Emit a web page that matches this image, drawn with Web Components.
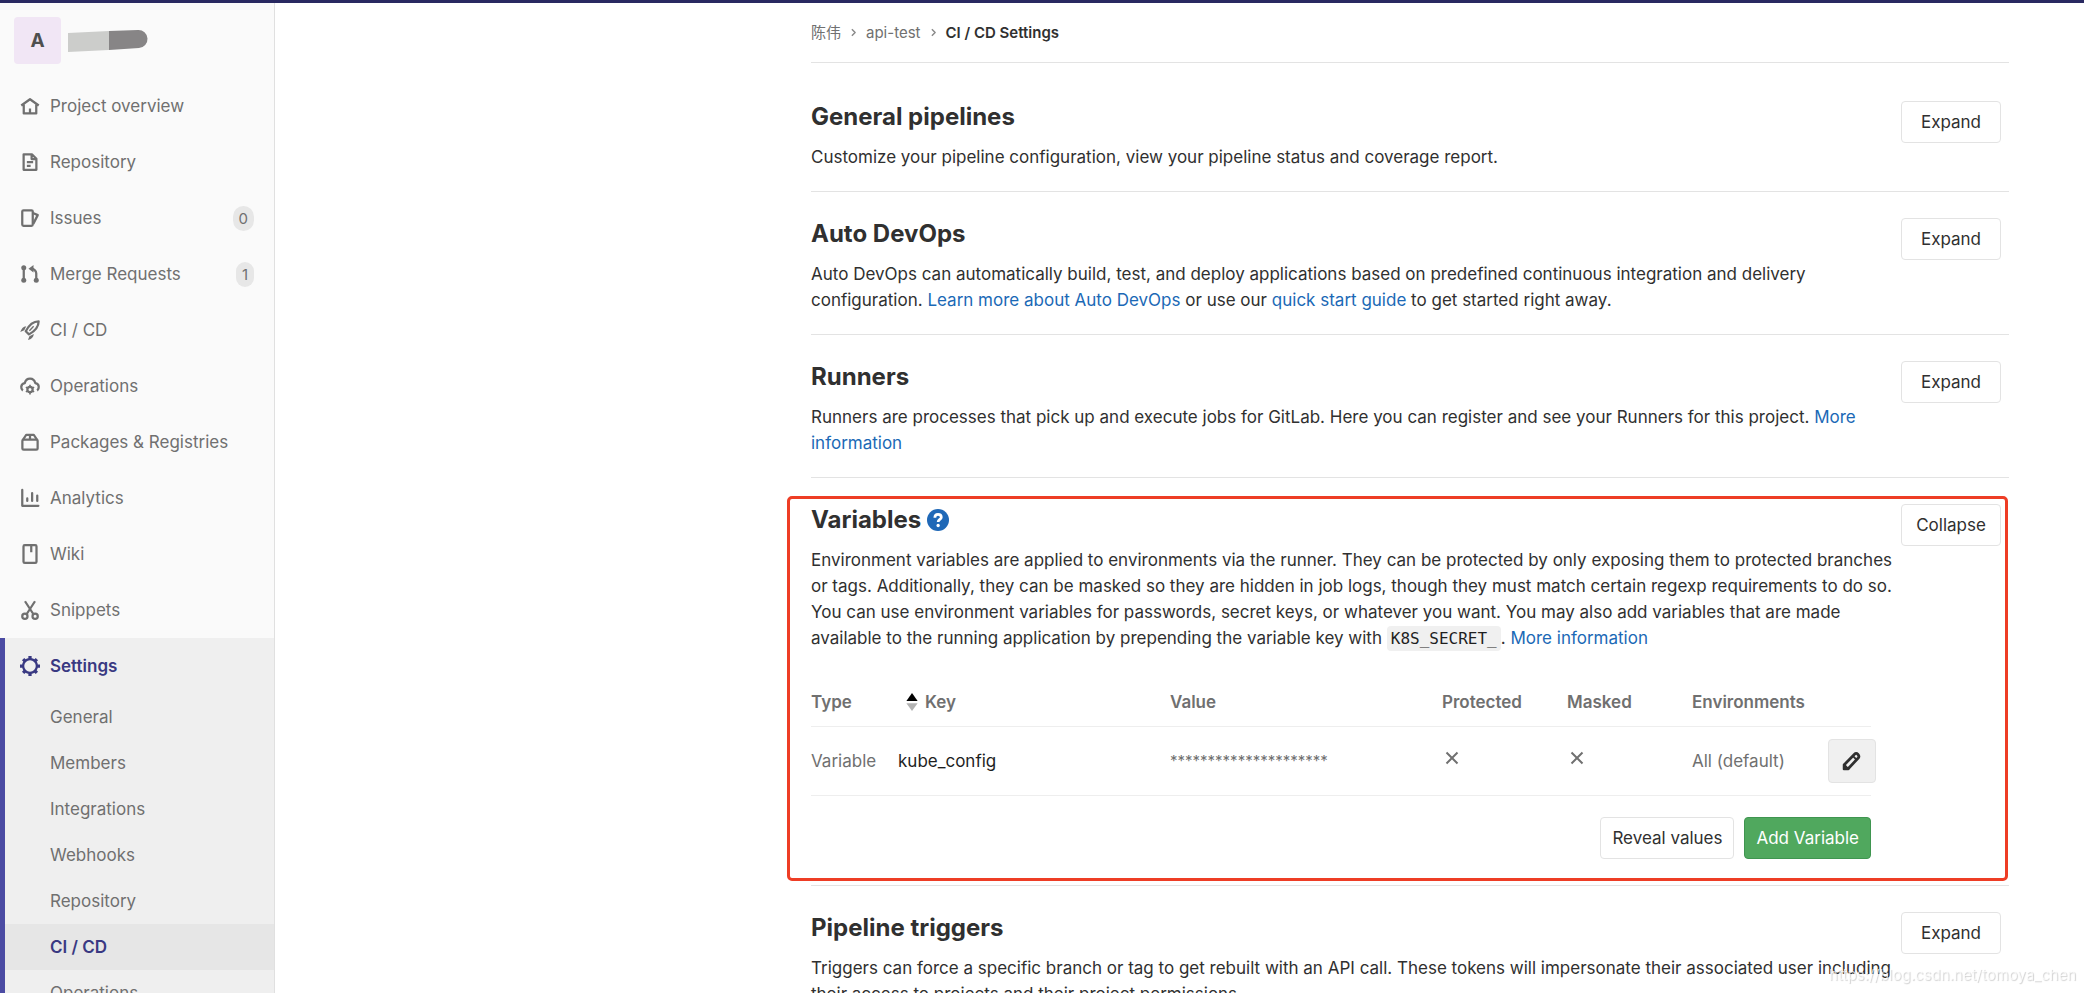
<!DOCTYPE html>
<html lang="en">
<head>
<meta charset="utf-8">
<meta name="viewport" content="width=device-width, initial-scale=1">
<title>CI / CD Settings</title>
<style>
  body { margin: 0; font-family: Inter, "Noto Sans CJK SC", "Liberation Sans", sans-serif; font-size: 17px; line-height: 26px; color: #303030; background: #fff; }
  a { color: #1b69b6; text-decoration: none; }
  code { font-family: "DejaVu Sans Mono", monospace; font-size: 16px; line-height: 20px; color: #1f1f1f; background: #f0f0f0; border-radius: 4px; padding: 3px 4px; }
</style>
</head>
<body>
<app-shell>
  <side-nav slot="nav">
    <nav-item icon="home">Project overview</nav-item>
    <nav-item icon="doc">Repository</nav-item>
    <nav-item icon="issues" count="0">Issues</nav-item>
    <nav-item icon="merge" count="1">Merge Requests</nav-item>
    <nav-item icon="rocket">CI / CD</nav-item>
    <nav-item icon="cloud">Operations</nav-item>
    <nav-item icon="package">Packages &amp; Registries</nav-item>
    <nav-item icon="chart">Analytics</nav-item>
    <nav-item icon="book">Wiki</nav-item>
    <nav-item icon="scissors">Snippets</nav-item>
    <nav-group slot="group">
      <nav-item icon="gear" active>Settings</nav-item>
      <nav-item sub>General</nav-item>
      <nav-item sub>Members</nav-item>
      <nav-item sub>Integrations</nav-item>
      <nav-item sub>Webhooks</nav-item>
      <nav-item sub>Repository</nav-item>
      <nav-item sub active>CI / CD</nav-item>
      <nav-item sub>Operations</nav-item>
    </nav-group>
  </side-nav>

  <crumb-trail></crumb-trail>

  <settings-section heading="General pipelines" action="Expand" first>
    Customize your pipeline configuration, view your pipeline status and coverage report.
  </settings-section>
  <settings-section heading="Auto DevOps" action="Expand">
    Auto DevOps can automatically build, test, and deploy applications based on predefined continuous integration and delivery<br>
    configuration. <a href="#autodevops">Learn more about Auto DevOps</a> or use our <a href="#quickstart">quick start guide</a> to get started right away.
  </settings-section>
  <settings-section heading="Runners" action="Expand">
    Runners are processes that pick up and execute jobs for GitLab. Here you can register and see your Runners for this project. <a href="#runners">More<br>information</a>
  </settings-section>
  <settings-section heading="Variables" action="Collapse" help marked>
    Environment variables are applied to environments via the runner. They can be protected by only exposing them to protected branches<br>
    or tags. Additionally, they can be masked so they are hidden in job logs, though they must match certain regexp requirements to do so.<br>
    You can use environment variables for passwords, secret keys, or whatever you want. You may also add variables that are made<br>
    available to the running application by prepending the variable key with <code>K8S_SECRET_</code>. <a href="#variables">More information</a>
    <variables-table slot="body"></variables-table>
  </settings-section>
  <settings-section heading="Pipeline triggers" action="Expand">
    Triggers can force a specific branch or tag to get rebuilt with an API call. These tokens will impersonate their associated user including<br>
    their access to projects and their project permissions.
  </settings-section>
</app-shell>

<script>
const ICONS = {
  home: '<path d="M1 7.6 8 2.6l7 5M3 7v6.9h10V7M8 13.9v-4" />',
  doc: '<path d="M2.9 1.8h6.6l3.6 3.6v8.8H2.900zM9.300 1.800v3.800h3.800M5.500 8.100h5M5.500 11h3"/>',
  issues: '<rect x="1.800" y="1.800" width="8.400" height="12.400" rx="1"/><path d="m10.400 4 3.800 1.700-3.600 7"/>',
  merge: '<path d="M3 3v10M13 13V7.500A3.700 3.700 0 0 0 9 4"/><g fill="currentColor" stroke="none"><circle cx="3" cy="2.900" r="2"/><circle cx="3" cy="13" r="2"/><circle cx="13" cy="13" r="2"/><path d="M10.800.8v6L6.800 3.800z"/></g>',
  rocket: '<path d="M14.900 1.100c-4.100 0-7.900 3.300-10.300 7.900l2.600 2.500c4.500-2.600 7.700-6 7.700-10.400z"/><path d="m7.500 8.600 3.400-3.600" stroke-width="1.100"/><path d="M.2 9.600C1 7 2.500 5.200 5 4.900L3.400 8.200zM6.400 15.900c2.700-.5 4.300-2.100 4.700-4.700l-3.600 1.700z" fill="currentColor" stroke="none"/>',
  cloud: '<path d="M2.300 11.600C1.300 10.900.9 9.700 1 8.600c.2-1.700 1.400-2.700 2.800-2.900C4.400 3.300 6 2 8 2s3.700 1.300 4.200 3.700c1.500.2 2.700 1.300 2.800 2.900.1 1.100-.3 2.300-1.300 3"/><circle cx="8" cy="10.800" r="2.100"/><path d="M8 7v2M8 12.600v2.200M4.700 8.900l1.700 1M9.600 11.700l1.700 1M4.700 12.700l1.700-1M9.600 9.900l1.700-1" stroke-width="1.300"/>',
  package: '<rect x="1.900" y="6" width="12.200" height="8.100" rx="1"/><path d="M2.300 6.300 5 2.200h6l2.700 4.100M8 2.200V6" />',
  chart: '<path d="M1.800 1.500v12.700h12.900M5.800 10.300v-2M9.700 10.300V4M13.800 10.300V6" stroke-linecap="round"/>',
  book: '<rect x="2.800" y=".9" width="10.400" height="14.200" rx="1"/><path d="M9 1v5.600"/>',
  scissors: '<path d="M4 1 10.500 11M12 1 5.500 11"/><circle cx="3.900" cy="13" r="2.100"/><circle cx="12.100" cy="13" r="2.100"/>',
  gear: '<circle cx="8" cy="8" r="5.500"/><path d="M8 0v2.600M8 13.400V16M0 8h2.600M13.400 8H16M2.500 2.500l1.700 1.700M11.800 11.800l1.700 1.700M2.500 13.500l1.700-1.700M11.800 4.200l1.700-1.700" stroke-width="2.600"/>',
  chevron: '<path d="m6 4 4 4-4 4"/>',
  close: '<path d="m2.500 2.500 11 11M13.500 2.500l-11 11" stroke-width="2"/>',
  pencil: '<path d="M2.200 13.800v-3.200l7.600-7.800c1.100-1.100 2-1.100 3 0s1 2 0 3L5.300 13.800z" stroke-width="2.200"/><path d="m8.800 4.100 3.100 3.100" stroke-width="1.500"/><path d="M1.500 11v3.500H5z" fill="currentColor"/>',
  help: '<circle cx="8" cy="8" r="8" fill="#1f68b7" stroke="none"/><path d="M5.700 6.300C5.700 4.600 6.700 3.900 8 3.900s2.400.7 2.400 2.100C10.400 7.600 8.100 7.500 8.100 9.400" stroke="#fff" stroke-width="2"/><circle cx="8.100" cy="12" r="1.200" fill="#fff" stroke="none"/>',
  sort: '<path d="M8 0 13 7H3z" fill="#000" stroke="none"/><path d="M8 16 3 9h10z" fill="#b3b3b3" stroke="none"/>'
};

class BaseElement extends HTMLElement {
  connectedCallback() {
    if (this.shadowRoot) return;
    this.attachShadow({ mode: 'open' }).innerHTML = this.view();
  }
}

customElements.define('gl-icon', class extends BaseElement {
  view() {
    return `<style>
      :host { display: block; width: 20px; height: 20px; flex: none; }
      svg { display: block; width: 100%; height: 100%; overflow: visible; }
    </style>
    <svg viewBox="0 0 16 16" fill="none" stroke="currentColor" stroke-width="1.800" stroke-linejoin="round" aria-hidden="true">${ICONS[this.getAttribute('name')]}</svg>`;
  }
});

customElements.define('ui-button', class extends BaseElement {
  view() {
    const label = this.getAttribute('label');
    return `<style>
      :host { display: block; }
      button { box-sizing: border-box; width: 100%; height: 42px; padding: 0 11px; font: inherit; color: #303030; background: #fff; border: 1px solid #e3e3e3; border-radius: 4px; white-space: nowrap; display: flex; align-items: center; justify-content: center; cursor: pointer; }
      :host([kind=success]) button { color: #fff; background: #50a85e; border-color: #3f9550; }
      :host([kind=edit]) button { height: 44px; background: #f0f0f0; }
    </style>
    <button type="button" ${label ? `aria-label="${label}"` : ''}><slot></slot></button>`;
  }
});

customElements.define('app-shell', class extends BaseElement {
  view() {
    return `<style>
      :host { display: grid; grid-template: 3px minmax(0, 1fr) / 275px minmax(0, 1fr); height: 100vh; }
      header { grid-column: 1 / -1; background: #292961; }
      aside { overflow: hidden; background: #fafafa; border-right: 1px solid #e0e0e0; }
      main { overflow-y: auto; scrollbar-width: none; padding: 0 75px 0 24px; }
      .content { max-width: 1198px; margin-left: auto; }
      .credit { position: fixed; right: 8px; bottom: 5px; color: rgba(255,255,255,.7); text-shadow: 1px 1px 1px rgba(0,0,0,.18); font-size: 15px; }
    </style>
    <header></header>
    <aside><slot name="nav"></slot></aside>
    <main><div class="content"><slot></slot></div></main>
    <div class="credit">https://blog.csdn.net/tomoya_chen</div>`;
  }
});

customElements.define('side-nav', class extends BaseElement {
  view() {
    return `<style>
      :host { display: block; }
      .project { display: flex; align-items: center; gap: 7px; height: 47px; padding: 14px; }
      .avatar { box-sizing: border-box; width: 47px; height: 47px; border-radius: 4px; background: #f1e6f5; color: #4f4f4f; font-size: 19px; font-weight: 700; line-height: 47px; text-align: center; }
      .name { width: 80px; height: 24px; }
    </style>
    <div class="project">
      <div class="avatar">A</div>
      <svg class="name" viewBox="0 0 80 24" aria-hidden="true"><path d="M0 4 41 2v19L0 23z" fill="#cccdcb"/><path d="M41 2 70 1a9 9 0 0 1 1 18L41 21z" fill="#878586"/></svg>
    </div>
    <nav><slot></slot><slot name="group"></slot></nav>`;
  }
});

customElements.define('nav-group', class extends BaseElement {
  view() {
    return `<style>:host { display: block; background: linear-gradient(90deg, #4b4ba3 5px, #efefef 5px); }</style><slot></slot>`;
  }
});

customElements.define('nav-item', class extends BaseElement {
  view() {
    const icon = this.getAttribute('icon'), count = this.getAttribute('count');
    return `<style>
      :host { display: block; }
      a { display: flex; align-items: center; gap: 10px; height: 56px; padding: 0 20px; color: #707070; text-decoration: none; white-space: nowrap; }
      :host([sub]) a { height: 46px; padding-left: 50px; }
      :host([active]) a { color: #393982; font-weight: 600; }
      :host([sub][active]) a { background: linear-gradient(90deg, transparent 5px, #e6e6e6 5px); }
      .count { margin-left: auto; padding: 0 6px; font-size: 15px; line-height: 25px; border-radius: 13px; background: #e7e7e7; }
    </style>
    <a href="#">${icon ? `<gl-icon name="${icon}"></gl-icon>` : ''}<span><slot></slot></span>${count ? `<span class="count">${count}</span>` : ''}</a>`;
  }
});

customElements.define('crumb-trail', class extends BaseElement {
  view() {
    return `<style>
      :host { display: block; }
      nav { display: flex; align-items: center; gap: 6px; height: 59px; font-size: 15px; border-bottom: 1px solid #e3e3e3; }
      a { color: #707070; text-decoration: none; }
      a.current { color: #303030; font-weight: 600; }
      gl-icon { width: 13px; height: 13px; color: #8a8a8a; }
    </style>
    <nav aria-label="Breadcrumbs"><a href="#">陈伟</a><gl-icon name="chevron"></gl-icon><a href="#">api-test</a><gl-icon name="chevron"></gl-icon><a class="current" href="#">CI / CD Settings</a></nav>`;
  }
});

customElements.define('settings-section', class extends BaseElement {
  view() {
    return `<style>
      :host { display: block; position: relative; border-top: 1px solid #e3e3e3; padding: 26px 8px 21px 0; }
      :host([first]) { border-top: 0; padding-top: 38px; }
      :host([marked]) { padding-bottom: 26px; }
      :host([marked])::after { content: ""; position: absolute; inset: 18px 1px 4px -24px; border: 3px solid #ee3d25; border-radius: 5px; pointer-events: none; }
      .row { display: grid; grid-template-columns: minmax(0, 1fr) 100px; gap: 30px; align-items: start; }
      h2 { display: flex; align-items: center; gap: 6px; margin: 0 0 11px; font-size: 24px; line-height: 32px; font-weight: 700; }
      p { margin: 0; }
      @media (min-width: 1700px) { p { white-space: nowrap; } }
      h2 gl-icon { width: 22px; height: 22px; }
    </style>
    <div class="row">
      <div>
        <h2>${this.getAttribute('heading')}${this.hasAttribute('help') ? '<a href="#help" aria-label="Help"><gl-icon name="help"></gl-icon></a>' : ''}</h2>
        <p><slot></slot></p>
        <slot name="body"></slot>
      </div>
      <ui-button>${this.getAttribute('action')}</ui-button>
    </div>`;
  }
});

customElements.define('variables-table', class extends BaseElement {
  view() {
    return `<style>
      :host { display: block; }
      table { width: 100%; table-layout: fixed; border-collapse: collapse; margin-top: 26px; color: #707070; }
      th, td { padding: 0; text-align: left; border-bottom: 1px solid #eee; white-space: nowrap; }
      th { height: 49px; font-weight: 600; }
      td { height: 68px; }
      .sort { display: flex; align-items: center; gap: 4px; padding-left: 5px; }
      .sort gl-icon { width: 18px; height: 18px; }
      .key { color: #1f1f1f; }
      .secret { font-size: 15px; }
      .mark { width: 16px; height: 16px; margin: 0 0 6px 2px; }
      .edit { width: 48px; }
      .edit gl-icon { width: 20px; height: 20px; }
      .type { width: 87px; } .flag { width: 125px; } .env { width: 136px; } .act { width: 43px; }
      .actions { display: flex; justify-content: flex-end; gap: 10px; margin-top: 21px; }
    </style>
    <table>
      <colgroup><col class="type"><col><col><col class="flag"><col class="flag"><col class="env"><col class="act"></colgroup>
      <thead><tr><th>Type</th><th><span class="sort"><gl-icon name="sort"></gl-icon>Key</span></th><th>Value</th><th>Protected</th><th>Masked</th><th>Environments</th><th></th></tr></thead>
      <tbody><tr><td>Variable</td><td class="key">kube_config</td><td class="secret">*********************</td><td><gl-icon class="mark" name="close"></gl-icon></td><td><gl-icon class="mark" name="close"></gl-icon></td><td>All (default)</td><td><ui-button class="edit" kind="edit" label="Edit"><gl-icon name="pencil"></gl-icon></ui-button></td></tr></tbody>
    </table>
    <div class="actions"><ui-button>Reveal values</ui-button><ui-button kind="success">Add Variable</ui-button></div>`;
  }
});
</script>
</body>
</html>
